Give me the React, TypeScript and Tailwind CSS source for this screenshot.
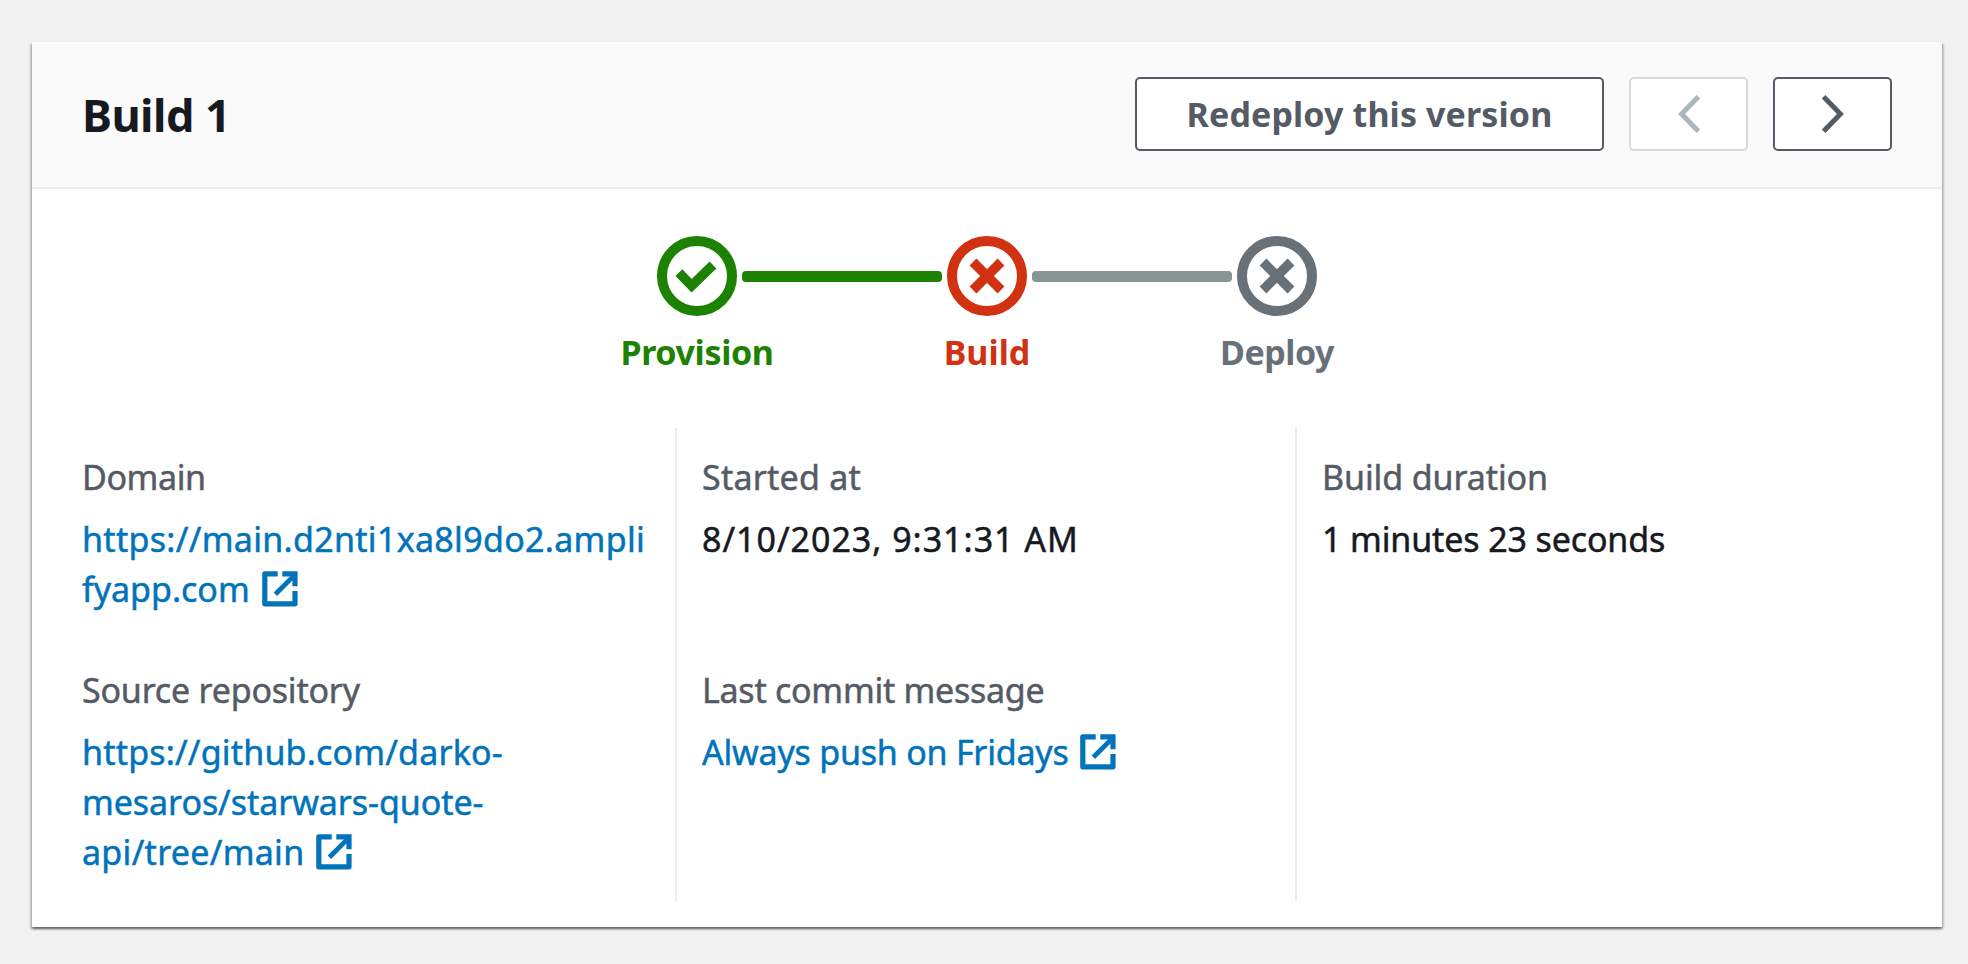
import type { ReactNode } from "react";

function Chevron({ direction }: { direction: "left" | "right" }) {
  return (
    <svg width="24" height="40" viewBox="0 0 24 40" fill="none" stroke="currentColor" strokeWidth="5">
      <path d={direction === "left" ? "M21.4 2.8 4.6 20l16.8 17.2" : "M2.6 2.8 19.4 20 2.6 37.2"} />
    </svg>
  );
}

function ExternalIcon({ className }: { className: string }) {
  return (
    <svg
      className={"inline-block align-[-5px] " + className}
      width="36"
      height="36"
      viewBox="0 0 36 36"
      fill="none"
      stroke="currentColor"
      strokeWidth="5.2"
    >
      <path d="M15.7 2.8H2.8V32.8H33V20" strokeLinejoin="round" />
      <path d="M20.3 2.8H33V15.3" />
      <path d="M13.4 23.2 32 4.6" strokeWidth="4.8" />
    </svg>
  );
}

function StepIcon({ kind }: { kind: "check" | "cross" }) {
  return (
    <svg width="80" height="80" viewBox="0 0 80 80" fill="none" stroke="currentColor">
      <circle cx="40" cy="40" r="35" strokeWidth="10" />
      {kind === "check" ? (
        <path d="M21.9 36.7 34.7 49.8 56 29" strokeWidth="9.6" />
      ) : (
        <path d="M26 26 54 54M54 26 26 54" strokeWidth="9.6" />
      )}
    </svg>
  );
}

function Step({ kind, label, className }: { kind: "check" | "cross"; label: string; className: string }) {
  return (
    <div className={"flex w-20 flex-col items-center gap-[11px] font-bold " + className}>
      <StepIcon kind={kind} />
      <div className="whitespace-nowrap">{label}</div>
    </div>
  );
}

function Field({ label, labelClass, children }: { label: string; labelClass: string; children: ReactNode }) {
  return (
    <div className="flex flex-col gap-3">
      <div className={"text-[#545b64] " + labelClass}>{label}</div>
      <div className="min-h-[100px]">{children}</div>
    </div>
  );
}

export default function App() {
  return (
    <main className="h-[964px] w-[1968px] overflow-hidden bg-[#f2f2f2] px-[26px] pt-[42px] pl-8 font-['Noto_Sans',sans-serif] text-[34px] leading-[50px] text-[#16191f]">
      <section className="h-[885px] w-[1910px] bg-white shadow-[0_-1px_0_0_#eaeded,0_2px_2px_0_rgba(0,28,36,0.45),2px_2px_2px_0_rgba(0,28,36,0.18),-2px_2px_2px_0_rgba(0,28,36,0.18)]">
        <header className="flex h-[147px] items-center justify-between border-b-2 border-[#eaeded] bg-[#fafafa] px-[50px]">
          <h1 className="text-[45px] leading-[50px] font-bold tracking-[-0.53px]">Build 1</h1>
          <div className="flex gap-[25px] pb-[2px] text-[#545b64]">
            <button className="h-[74px] w-[469px] rounded-[5px] border-2 border-[#545b64] bg-white font-bold tracking-[0.12px]">
              Redeploy this version
            </button>
            <button
              disabled
              aria-label="Previous build"
              className="flex h-[74px] w-[119px] items-center justify-center rounded-[5px] border-2 border-[#d5dbdb] bg-white text-[#aab7b8]"
            >
              <Chevron direction="left" />
            </button>
            <button
              aria-label="Next build"
              className="flex h-[74px] w-[119px] items-center justify-center rounded-[5px] border-2 border-[#545b64] bg-white"
            >
              <Chevron direction="right" />
            </button>
          </div>
        </header>

        <div className="flex h-[239px] items-start justify-center gap-[5px] pt-[47px]">
          <Step kind="check" label="Provision" className="text-[#1d8102] tracking-[-0.35px]" />
          <div className="mt-[35px] h-[11px] w-[200px] rounded-sm bg-[#1d8102]" />
          <Step kind="cross" label="Build" className="text-[#d13212]" />
          <div className="mt-[35px] h-[11px] w-[200px] rounded-sm bg-[#879596]" />
          <Step kind="cross" label="Deploy" className="text-[#687078] tracking-[-0.48px]" />
        </div>

        <div className="mx-[25px] grid h-[473px] grid-cols-[620px_620px_620px] [-webkit-text-stroke:0.5px_currentColor]">
          <div className="flex flex-col gap-[51px] border-r-2 border-[#eaeded] pt-6 pl-[25px]">
            <Field label="Domain" labelClass="tracking-[-0.4px]">
              <a className="text-[#0073bb]">
                <span className="block whitespace-nowrap tracking-[0.31px]">https://main.d2nti1xa8l9do2.ampli</span>
                <span>fyapp.com</span>
                <ExternalIcon className="ml-[12px]" />
              </a>
            </Field>
            <Field label="Source repository" labelClass="tracking-[-0.2px]">
              <a className="text-[#0073bb]">
                <span className="block whitespace-nowrap tracking-[0.19px]">https://github.com/darko-</span>
                <span className="block whitespace-nowrap tracking-[-0.06px]">mesaros/starwars-quote-</span>
                <span className="tracking-[0.29px]">api/tree/main</span>
                <ExternalIcon className="ml-[12px]" />
              </a>
            </Field>
          </div>
          <div className="flex flex-col gap-[51px] border-r-2 border-[#eaeded] pt-6 pl-[25px]">
            <Field label="Started at" labelClass="tracking-[0.24px]">
              <span className="tracking-[0.98px]">8/10/2023, 9:31:31 AM</span>
            </Field>
            <Field label="Last commit message" labelClass="tracking-[-0.26px]">
              <a className="text-[#0073bb]">
                <span className="tracking-[-0.22px]">Always push on Fridays</span>
                <ExternalIcon className="ml-[12px]" />
              </a>
            </Field>
          </div>
          <div className="pt-6 pl-[25px]">
            <Field label="Build duration" labelClass="tracking-[-0.1px]">
              <span className="tracking-[-0.13px]">1 minutes 23 seconds</span>
            </Field>
          </div>
        </div>
      </section>
    </main>
  );
}
